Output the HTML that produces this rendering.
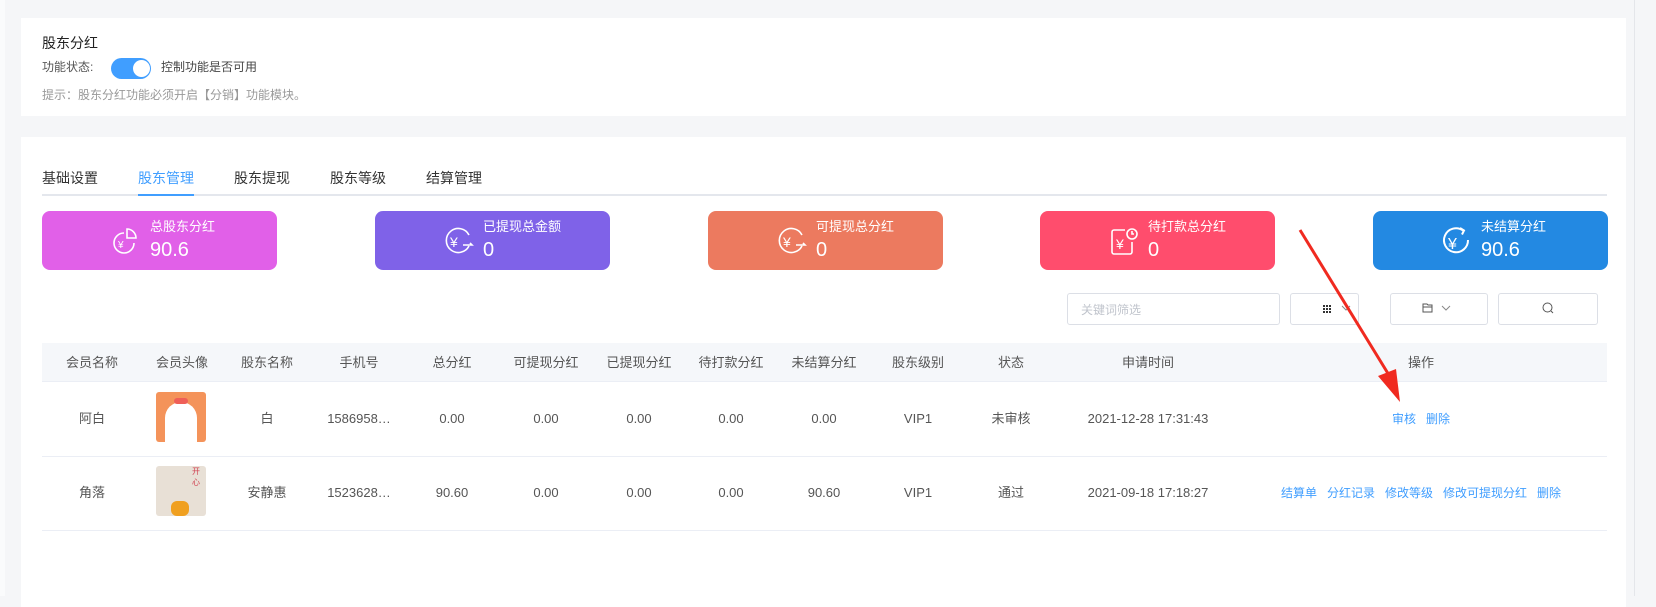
<!DOCTYPE html>
<html><head><meta charset="utf-8"><style>
*{margin:0;padding:0;box-sizing:border-box}
body{width:1656px;height:596px;background:#f5f6f8;font-family:"Liberation Sans","Noto Sans CJK SC",sans-serif;position:relative;overflow:hidden;color:#333}
.a{position:absolute;white-space:nowrap}
.card{position:absolute;background:#fff}
.stat{position:absolute;top:211px;width:235px;height:59px;border-radius:8px;color:#fff}
.stat .t{position:absolute;left:108px;top:7px;font-size:13px;line-height:18px}
.stat .v{position:absolute;left:108px;top:27px;font-size:20px;line-height:24px}
.stat svg{position:absolute;left:68px;top:14px}
.th{position:absolute;top:343px;height:39px;line-height:39px;font-size:13px;color:#555;transform:translateX(-50%);white-space:nowrap}
.td{position:absolute;font-size:13px;line-height:18px;color:#555;transform:translateX(-50%);white-space:nowrap}
.lk{color:#409eff;font-size:12px}
.box{position:absolute;top:293px;height:32px;border:1px solid #dcdfe6;border-radius:3px;background:#fff}
</style></head><body>
<div class="a" style="left:0;top:0;width:5px;height:596px;background:#fafbfc"></div>
<div class="card" style="left:21px;top:18px;width:1605px;height:98px"></div>
<div class="a" style="left:42px;top:33px;font-size:14px;color:#222">股东分红</div>
<div class="a" style="left:42px;top:58px;font-size:12px;color:#555">功能状态:</div>
<div class="a" style="left:111px;top:58px;width:40px;height:21px;border-radius:11px;background:#409eff"></div>
<div class="a" style="left:133px;top:60px;width:17px;height:17px;border-radius:50%;background:#fff"></div>
<div class="a" style="left:161px;top:58px;font-size:12px;color:#444">控制功能是否可用</div>
<div class="a" style="left:42px;top:86px;font-size:12px;color:#999">提示：股东分红功能必须开启【分销】功能模块。</div>
<div class="card" style="left:21px;top:137px;width:1605px;height:470px"></div>
<div class="a" style="left:1626px;top:0;width:30px;height:596px;background:#f5f6f8"></div>
<div class="a" style="left:1634px;top:0;width:1px;height:596px;background:#e4e6ea"></div>
<div class="a" style="left:42px;top:168px;font-size:14px;color:#333">基础设置</div>
<div class="a" style="left:138px;top:168px;font-size:14px;color:#409eff">股东管理</div>
<div class="a" style="left:234px;top:168px;font-size:14px;color:#333">股东提现</div>
<div class="a" style="left:330px;top:168px;font-size:14px;color:#333">股东等级</div>
<div class="a" style="left:426px;top:168px;font-size:14px;color:#333">结算管理</div>
<div class="a" style="left:42px;top:194px;width:1565px;height:2px;background:#e4e7ed"></div>
<div class="a" style="left:138px;top:194px;width:56px;height:2px;background:#409eff"></div>

<div class="stat" style="left:42px;background:#e160e8"><svg width="30" height="32" viewBox="0 0 30 32" fill="none" stroke="#fff" stroke-width="1.6"><path d="M14 8a10 10 0 1 0 10 10"/><path d="M17 4v9h9a9 9 0 0 0-9-9z"/><text x="8" y="23" font-size="10" fill="#fff" stroke="none">¥</text></svg><div class="t">总股东分红</div><div class="v">90.6</div></div>
<div class="stat" style="left:375px;background:#7f62e8"><svg width="32" height="32" viewBox="0 0 32 32" fill="none" stroke="#fff" stroke-width="1.6"><path d="M26 10a12 12 0 1 0 0 11"/><path d="M20 20h9l-2-2"/><text x="7" y="22" font-size="14" fill="#fff" stroke="none">¥</text></svg><div class="t">已提现总金额</div><div class="v">0</div></div>
<div class="stat" style="left:708px;background:#ec7a5f"><svg width="32" height="32" viewBox="0 0 32 32" fill="none" stroke="#fff" stroke-width="1.6"><path d="M26 10a12 12 0 1 0 0 11"/><path d="M20 20h9l-2-2"/><text x="7" y="22" font-size="14" fill="#fff" stroke="none">¥</text></svg><div class="t">可提现总分红</div><div class="v">0</div></div>
<div class="stat" style="left:1040px;background:#ff4d6d"><svg width="32" height="32" viewBox="0 0 32 32" fill="none" stroke="#fff" stroke-width="1.6"><path d="M17 5H6a2 2 0 0 0-2 2v20a2 2 0 0 0 2 2h16a2 2 0 0 0 2-2V17"/><circle cx="24" cy="9" r="5"/><path d="M24 6v3h2"/><text x="8" y="24" font-size="14" fill="#fff" stroke="none">¥</text></svg><div class="t">待打款总分红</div><div class="v">0</div></div>
<div class="stat" style="left:1373px;background:#2389e2"><svg width="32" height="32" viewBox="0 0 32 32" fill="none" stroke="#fff" stroke-width="2"><path d="M27 15a12 12 0 1 1-5-9.5"/><path d="M19 3l4 2.5-2 4"/><text x="7" y="24" font-size="16" fill="#fff" stroke="none">¥</text></svg><div class="t">未结算分红</div><div class="v">90.6</div></div>

<div class="box" style="left:1067px;width:213px"></div>
<div class="a" style="left:1081px;top:301px;font-size:12px;color:#c0c4cc">关键词筛选</div>
<div class="box" style="left:1290px;width:69px"></div>
<svg class="a" style="left:1323px;top:305px" width="9" height="9"><g fill="#333"><rect x="0" y="0" width="2" height="2"/><rect x="3" y="0" width="2" height="2"/><rect x="6" y="0" width="2" height="2"/><rect x="0" y="3" width="2" height="2"/><rect x="3" y="3" width="2" height="2"/><rect x="6" y="3" width="2" height="2"/><rect x="0" y="6" width="2" height="2"/><rect x="3" y="6" width="2" height="2"/><rect x="6" y="6" width="2" height="2"/></g></svg>
<svg class="a" style="left:1341px;top:304px" width="10" height="8"><path d="M1 2l4 4 4-4" fill="none" stroke="#888"/></svg>
<div class="box" style="left:1390px;width:98px"></div>
<svg class="a" style="left:1422px;top:302px" width="30" height="12"><path d="M1 2h4l1 1h4v7H1z M1 5h9" fill="none" stroke="#555"/><path d="M20 4l4 4 4-4" fill="none" stroke="#888"/></svg>
<div class="box" style="left:1498px;width:100px"></div>
<svg class="a" style="left:1542px;top:302px" width="12" height="12"><circle cx="5.5" cy="5.5" r="4.5" fill="none" stroke="#555"/><path d="M9 9l2 2" stroke="#555"/></svg>

<div class="a" style="left:42px;top:343px;width:1565px;height:39px;background:#f5f7fa;border-bottom:1px solid #ebeef5"></div>
<div class="th" style="left:92px">会员名称</div><div class="th" style="left:182px">会员头像</div><div class="th" style="left:267px">股东名称</div><div class="th" style="left:359px">手机号</div><div class="th" style="left:452px">总分红</div><div class="th" style="left:546px">可提现分红</div><div class="th" style="left:639px">已提现分红</div><div class="th" style="left:731px">待打款分红</div><div class="th" style="left:824px">未结算分红</div><div class="th" style="left:918px">股东级别</div><div class="th" style="left:1011px">状态</div><div class="th" style="left:1148px">申请时间</div><div class="th" style="left:1421px">操作</div>
<div class="a" style="left:42px;top:456px;width:1565px;height:1px;background:#ebeef5"></div>
<div class="a" style="left:42px;top:530px;width:1565px;height:1px;background:#ebeef5"></div>

<div class="a" style="left:156px;top:392px;width:50px;height:50px;border-radius:3px;background:#f4935a;overflow:hidden"><div style="position:absolute;left:9px;top:10px;width:32px;height:44px;border-radius:16px 16px 4px 4px;background:#fff"></div><div style="position:absolute;left:18px;top:6px;width:14px;height:6px;background:#ef5f58;border-radius:3px"></div></div>
<div class="a" style="left:156px;top:466px;width:50px;height:50px;border-radius:3px;background:#e8e0d6;overflow:hidden"><div style="position:absolute;left:15px;top:35px;width:18px;height:15px;background:#f0a020;border-radius:6px"></div><div class="a" style="left:36px;top:0px;font-size:8px;color:#d04050">开<br>心</div></div>

<div class="td" style="left:92px;top:410px">阿白</div><div class="td" style="left:267px;top:410px">白</div><div class="td" style="left:359px;top:410px">1586958…</div><div class="td" style="left:452px;top:410px">0.00</div><div class="td" style="left:546px;top:410px">0.00</div><div class="td" style="left:639px;top:410px">0.00</div><div class="td" style="left:731px;top:410px">0.00</div><div class="td" style="left:824px;top:410px">0.00</div><div class="td" style="left:918px;top:410px">VIP1</div><div class="td" style="left:1011px;top:410px">未审核</div><div class="td" style="left:1148px;top:410px">2021-12-28 17:31:43</div>
<div class="td lk" style="left:1421px;top:410px">审核 &nbsp; 删除</div>

<div class="td" style="left:92px;top:484px">角落</div><div class="td" style="left:267px;top:484px">安静惠</div><div class="td" style="left:359px;top:484px">1523628…</div><div class="td" style="left:452px;top:484px">90.60</div><div class="td" style="left:546px;top:484px">0.00</div><div class="td" style="left:639px;top:484px">0.00</div><div class="td" style="left:731px;top:484px">0.00</div><div class="td" style="left:824px;top:484px">90.60</div><div class="td" style="left:918px;top:484px">VIP1</div><div class="td" style="left:1011px;top:484px">通过</div><div class="td" style="left:1148px;top:484px">2021-09-18 17:18:27</div>
<div class="td lk" style="left:1421px;top:484px">结算单 &nbsp; 分红记录 &nbsp; 修改等级 &nbsp; 修改可提现分红 &nbsp; 删除</div>

<svg class="a" style="left:0;top:0" width="1656" height="596"><line x1="1300" y1="230" x2="1392" y2="380" stroke="#f02a20" stroke-width="3"/><polygon points="1378,376 1400,402 1396,369" fill="#f02a20"/></svg>
</body></html>
